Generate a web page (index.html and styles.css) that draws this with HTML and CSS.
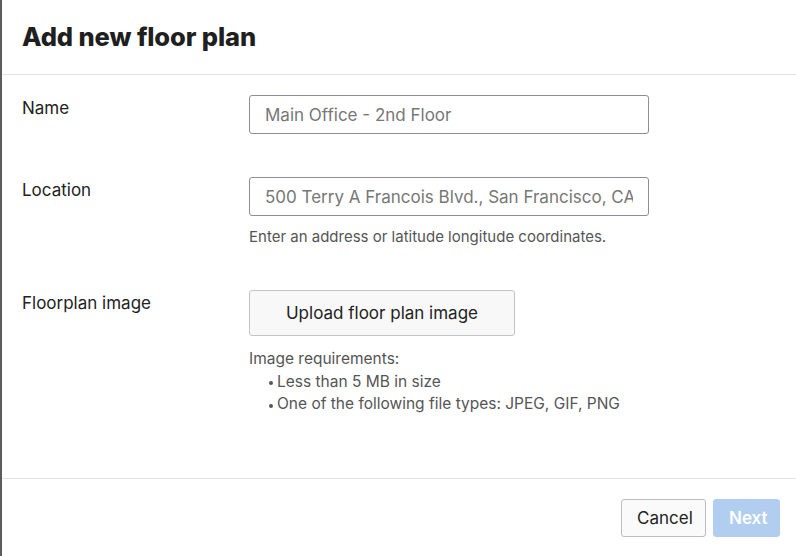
FILE: index.html
```html
<!DOCTYPE html>
<html lang="en">
<head>
<meta charset="utf-8">
<title>Add new floor plan</title>
<link rel="stylesheet" href="styles.css">
</head>
<body>
<div class="modal">
  <header class="modal-header">
    <h1 class="modal-title">Add new floor plan</h1>
  </header>
  <main class="modal-body">
    <div class="form-row">
      <label class="field-label" for="name">Name</label>
      <div class="field">
        <input class="text-input" id="name" type="text" placeholder="Main Office - 2nd Floor">
      </div>
    </div>
    <div class="form-row">
      <label class="field-label" for="location">Location</label>
      <div class="field">
        <input class="text-input" id="location" type="text" placeholder="500 Terry A Francois Blvd., San Francisco, CA">
        <p class="hint">Enter an address or latitude longitude coordinates.</p>
      </div>
    </div>
    <div class="form-row">
      <span class="field-label">Floorplan image</span>
      <div class="field">
        <button class="upload-btn" type="button">Upload floor plan image</button>
        <div class="requirements">
          <p class="req-title">Image requirements:</p>
          <ul class="req-list">
            <li>Less than 5 MB in size</li>
            <li>One of the following file types: JPEG, GIF, PNG</li>
          </ul>
        </div>
      </div>
    </div>
  </main>
  <footer class="modal-footer">
    <button class="btn btn-secondary" type="button">Cancel</button>
    <button class="btn btn-primary" type="button" disabled>Next</button>
  </footer>
</div>
</body>
</html>
```

FILE: styles.css
```css
* { box-sizing: border-box; }

html, body {
  margin: 0;
  padding: 0;
  background: #ffffff;
}

body {
  font-family: Inter, "Liberation Sans", sans-serif;
  color: #222222;
}

.modal {
  width: 796px;
  height: 556px;
  display: flex;
  flex-direction: column;
  background: #ffffff;
  border-left: 2px solid #5c5c5c;
}

.modal-header {
  height: 75px;
  flex: 0 0 auto;
  display: flex;
  align-items: center;
  padding-left: 20px;
  padding-bottom: 2px;
  border-bottom: 1px solid #e2e2e2;
}

.modal-title {
  margin: 0;
  font-size: 25.5px;
  font-weight: 800;
  letter-spacing: -0.1px;
  color: #1f1f1f;
}

.modal-body {
  flex: 1 1 auto;
  padding: 20px 0 0 20px;
  display: flex;
  flex-direction: column;
  gap: 43px;
}

.form-row {
  display: grid;
  grid-template-columns: 227px 400px;
  align-items: start;
}

.field-label {
  font-size: 17px;
  line-height: 24px;
  margin-top: 1px;
  color: #222222;
}

.field {
  display: flex;
  flex-direction: column;
}

.text-input {
  width: 400px;
  height: 39px;
  border: 1px solid #8e8e96;
  border-radius: 3px;
  padding: 0 15px;
  font-family: inherit;
  font-size: 17px;
  color: #222222;
  background: #ffffff;
  outline: none;
}

.text-input::placeholder {
  color: #777777;
  opacity: 1;
}

.hint {
  margin: 11px 0 0;
  font-size: 15px;
  line-height: 20px;
  color: #555555;
}

.upload-btn {
  width: 266px;
  height: 46px;
  border: 1px solid #c4c4c4;
  border-radius: 3px;
  background: #f8f8f8;
  font-family: inherit;
  font-size: 17px;
  color: #222222;
  padding: 0;
  margin-bottom: 12px;
}

.requirements {
  font-size: 15.5px;
  line-height: 22.5px;
  color: #555555;
}

.req-title {
  margin: 0;
}

.req-list {
  list-style: none;
  margin: 0;
  padding: 0 0 0 20px;
}

.req-list li {
  position: relative;
  padding-left: 8px;
}

.req-list li::before {
  content: "";
  position: absolute;
  left: 0;
  top: 10.5px;
  width: 4px;
  height: 4px;
  border-radius: 50%;
  background: #555555;
}

.modal-footer {
  flex: 0 0 auto;
  height: 78px;
  border-top: 1px solid #e2e2e2;
  display: flex;
  justify-content: flex-end;
  align-items: flex-start;
  gap: 7px;
  padding: 20px 16px 0 0;
}

.btn {
  height: 38px;
  border-radius: 3px;
  font-family: inherit;
  font-size: 17px;
  padding: 0 15px;
}

.btn-secondary {
  width: 85px;
  border: 1px solid #bdbdbd;
  background: #fafafa;
  color: #222222;
}

.btn-primary {
  width: 67px;
  border: 1px solid #b1cdf0;
  background: #b1cdf0;
  color: #ffffff;
  font-weight: 600;
}
```
